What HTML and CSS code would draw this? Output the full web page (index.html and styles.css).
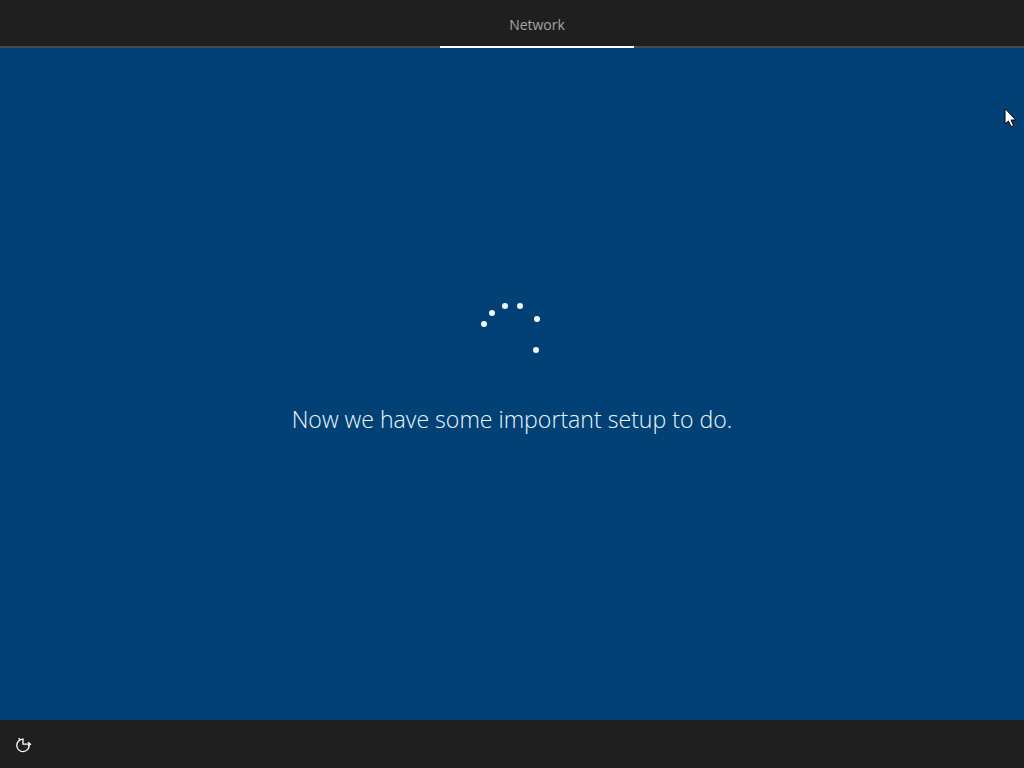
FILE: index.html
```html
<!DOCTYPE html>
<html lang="en">
<head>
<meta charset="utf-8">
<title>Network</title>
<link rel="stylesheet" href="styles.css">
</head>
<body>
<div class="screen">
  <header class="topbar">
    <nav class="tab">Network</nav>
  </header>
  <main class="stage">
    <div class="spinner">
      <i class="dot d1"></i><i class="dot d2"></i><i class="dot d3"></i>
      <i class="dot d4"></i><i class="dot d5"></i><i class="dot d6"></i>
    </div>
    <p class="message">Now we have some important setup to do.</p>
    <svg class="cursor" width="14" height="21" viewBox="0 0 14 21">
      <path d="M2 1.5V17L5.4 14L8 19.6L10.6 18.5L8 13H12.8Z" fill="#fff" stroke="#000" stroke-width="1"/>
    </svg>
  </main>
  <footer class="bottombar">
    <svg class="access" width="18" height="18" viewBox="0 0 18 18" fill="none" stroke="#fff" stroke-width="1.3">
      <path d="M9 4.2A6.2 6.2 0 1 0 15.2 10.2"/>
      <path d="M4.6 3.2L6.2 5M9 3.5V9.2H16.2"/>
      <path d="M14 7.3L16.4 9.2L14 11"/>
    </svg>
  </footer>
</div>
</body>
</html>
```

FILE: styles.css
```css
* { box-sizing: border-box; }
html, body { margin: 0; height: 100%; }
body { background: #024175; font-family: "Open Sans", "Noto Sans", sans-serif; overflow: hidden; }
.screen { display: flex; flex-direction: column; width: 1024px; height: 768px; }
.topbar {
  height: 48px;
  background: #1f1f1f;
  border-bottom: 2px solid #4a4a4a;
  display: flex;
  padding-left: 440px;
  flex: none;
}
.tab {
  width: 194px;
  height: 48px;
  border-bottom: 2px solid #fff;
  color: #a6a6a6;
  font-size: 14px;
  line-height: 50px;
  text-align: center;
}
.stage {
  flex: 1;
  position: relative;
  background: #024175;
  display: flex;
  flex-direction: column;
  align-items: center;
  padding-top: 254px;
}
.spinner { position: relative; width: 64px; height: 56px; }
.dot { position: absolute; width: 6px; height: 6px; border-radius: 50%; background: #f4f9fc; }
.d1 { left: 1.3px; top: 19.3px; }
.d2 { left: 9.3px; top: 7.7px; }
.d3 { left: 22.3px; top: 1px; }
.d4 { left: 37px; top: 1px; }
.d5 { left: 54px; top: 14.3px; }
.d6 { left: 52.7px; top: 45px; }
.message {
  margin: 45px 0 0;
  color: #eef7fc;
  font-size: 23.1px;
  line-height: 32px;
  font-weight: 300;
}
.cursor { position: absolute; left: 1003px; top: 59px; }
.bottombar {
  height: 48px;
  background: #1f1f1f;
  flex: none;
  display: flex;
  align-items: center;
  padding-left: 14px;
}
```
